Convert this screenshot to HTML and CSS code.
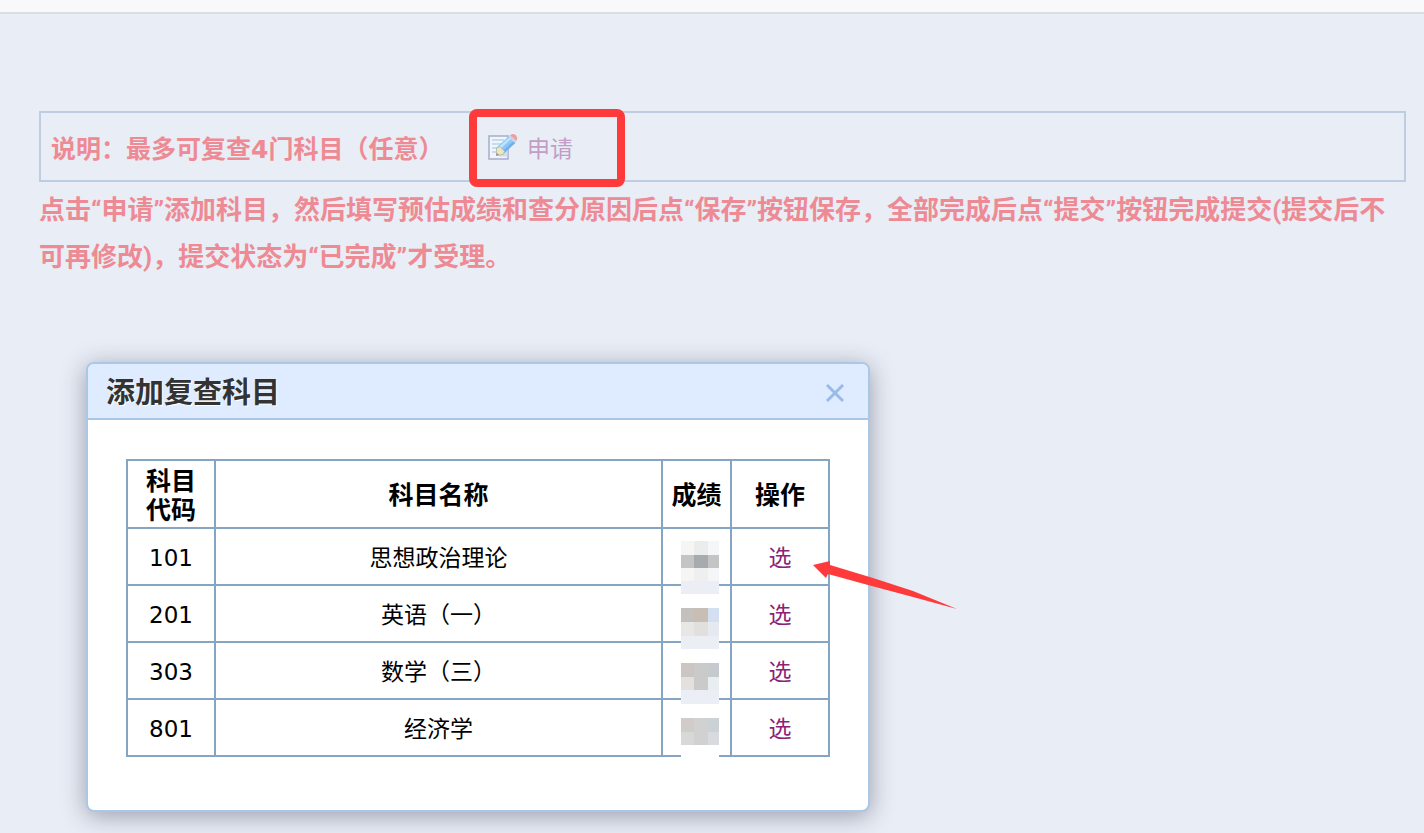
FILE: index.html
```html
<!DOCTYPE html>
<html lang="zh-CN">
<head>
<meta charset="utf-8">
<title>添加复查科目</title>
<link rel="stylesheet" href="styles.css">
</head>
<body>
<header class="topbar"></header>
<main class="page">
  <section class="notice">
    <strong class="notice-text">说明：最多可复查<span class="num">4</span>门科目（任意）</strong>
    <div class="apply">
      <a class="apply-link" href="#apply">
        <svg class="apply-icon" viewBox="0 0 30 28" aria-hidden="true">
          <rect x="1" y="3" width="19" height="23" fill="#f1f4fb" stroke="#aab1cf" stroke-width="1.6"/>
          <path d="M4 7h12M4 11h10M4 15h8M4 19h6" stroke="#b9d2ea" stroke-width="1.4"/>
          <path d="M11 22h7v-8" fill="none" stroke="#d5dded" stroke-width="3"/>
          <path d="M8 15 L21.500 2.500 L28 9 L15 21.500 L8.500 22.500Z" fill="#8cc8f5"/>
          <path d="M12 14.500 L23 4.500" stroke="#bfe4fb" stroke-width="2.400"/>
          <path d="M15 19.500 L26.500 9" stroke="#6fb0ea" stroke-width="2.400"/>
          <path d="M8.500 15 l3.500-1.500 l4.500 5 L15 21.500 L8.500 22.500Z" fill="#ece5bd" stroke="#b9b9a4" stroke-width=".8"/>
          <path d="M8.200 22.700 l.5-3 l2.300 2.200Z" fill="#8b8f93"/>
          <path d="M20.300 3.800 l2.200-1.900 l6 5.800 l-2.200 2Z" fill="#c9d5e6"/>
          <path d="M22.200 2.200 Q25-.3 28 2.200 Q30.300 5 28.200 7.800Z" fill="#e9a0a8"/>
        </svg>
        <span>申请</span>
      </a>
    </div>
  </section>
  <p class="tips">点击“申请”添加科目，然后填写预估成绩和查分原因后点“保存”按钮保存，全部完成后点“提交”按钮完成提交(提交后不可再修改)，提交状态为“已完成”才受理。</p>

  <section class="dialog" role="dialog" aria-labelledby="dialog-title">
    <header class="dialog-head">
      <h2 class="dialog-title" id="dialog-title">添加复查科目</h2>
      <button class="close" type="button" aria-label="关闭">
        <svg viewBox="0 0 20 20" aria-hidden="true"><path d="M2 2 18 18M18 2 2 18" stroke="#98bbe8" stroke-width="3"/></svg>
      </button>
    </header>
    <div class="dialog-body">
      <table class="subjects">
        <colgroup><col class="col-code"><col><col class="col-score"><col class="col-action"></colgroup>
        <thead>
          <tr><th>科目<br>代码</th><th>科目名称</th><th>成绩</th><th>操作</th></tr>
        </thead>
        <tbody>
          <tr><td>101</td><td>思想政治理论</td><td></td><td><a href="#101">选</a></td></tr>
          <tr><td>201</td><td>英语（一）</td><td></td><td><a href="#201">选</a></td></tr>
          <tr><td>303</td><td>数学（三）</td><td></td><td><a href="#303">选</a></td></tr>
          <tr><td>801</td><td>经济学</td><td></td><td><a href="#801">选</a></td></tr>
        </tbody>
      </table>
      <svg class="mosaic" viewBox="0 0 38 218" shape-rendering="crispEdges" aria-hidden="true">
        <rect width="38" height="218" fill="#fff"/>
        <path fill="#f6f5f4" d="M0 0h13v14H0zM0 27h13v13H0z"/>
        <path fill="#ebecec" d="M13 0h14v14H13z"/>
        <path fill="#f4f6f8" d="M27 0h11v14H27zM27 27h11v13H27z"/>
        <path fill="#c3c4c4" d="M0 14h13v13H0zM27 14h11v13H27z"/>
        <path fill="#a7abae" d="M13 14h14v13H13z"/>
        <path fill="#f0efef" d="M13 27h14v13H13z"/>
        <path fill="#ebeff5" d="M0 40h38v13H0zM0 95h38v13H0zM0 149h38v14H0z"/>
        <path fill="#c3c0be" d="M0 67h13v14H0z"/>
        <path fill="#c8beb4" d="M13 67h14v14H13z"/>
        <path fill="#d4e0f1" d="M27 67h11v14H27z"/>
        <path fill="#e9e7e6" d="M0 81h13v14H0z"/>
        <path fill="#e2e0de" d="M13 81h14v14H13z"/>
        <path fill="#e6eaf0" d="M27 81h11v14H27z"/>
        <path fill="#cbc6c4" d="M0 122h13v14H0z"/>
        <path fill="#cacaca" d="M13 122h14v27H13z"/>
        <path fill="#c6cace" d="M27 122h11v14H27z"/>
        <path fill="#e2e1e0" d="M0 136h13v13H0z"/>
        <path fill="#e8edef" d="M27 136h11v13H27z"/>
        <path fill="#d1ccc8" d="M0 177h13v14H0z"/>
        <path fill="#d1d1d1" d="M13 177h14v27H13z"/>
        <path fill="#ccd1d6" d="M27 177h11v14H27z"/>
        <path fill="#d7d8d8" d="M0 191h13v13H0z"/>
        <path fill="#d9dadf" d="M27 191h11v13H27z"/>
      </svg>
      <svg class="arrow" viewBox="0 0 146 50" aria-hidden="true">
        <path d="M0 4 L17 0 L17 4 L60 17 L100 30 L144 48 L100 36 L55 24 L15 13 L13 17Z" fill="#ff3a3a"/>
      </svg>
    </div>
  </section>
</main>
</body>
</html>
```
FILE: styles.css
```css
* { box-sizing: border-box; }

body {
  margin: 0;
  min-height: 100vh;
  background: #e9edf6;
  color: #000;
  font-family: "DejaVu Sans", "Noto Sans CJK SC", sans-serif;
  font-size: 23px;
}

.topbar {
  height: 14px;
  background: #f9f9fb;
  border-bottom: 2px solid #dddee1;
}

.page { padding: 97px 18px 16px 39px; }

.notice {
  display: flex;
  align-items: center;
  height: 71px;
  padding: 0 10px;
  border: 2px solid #becde1;
}

.notice-text,
.tips {
  color: #ee8a93;
  font-family: Roboto, "Noto Sans CJK SC", sans-serif;
  font-weight: 700;
}

.notice-text { width: 418px; font-size: 25px; white-space: nowrap; }
.num { font-family: "DejaVu Sans", sans-serif; }

.apply {
  position: relative;
  height: 78px;
  width: 156px;
  display: flex;
  align-items: center;
  margin-top: 2px;
  padding: 0 0 2px 19px;
}

.apply::after {
  content: "";
  position: absolute;
  inset: 0;
  border: 8px solid #ff3a3a;
  border-radius: 8px;
  pointer-events: none;
}

.apply-link {
  display: flex;
  align-items: center;
  gap: 9px;
  color: #c29dc6;
  text-decoration: none;
  white-space: nowrap;
}

.apply-icon { width: 30px; height: 28px; }

.tips {
  margin: 5px 0 81px;
  font-size: 26px;
  line-height: 47px;
}

.dialog {
  width: 784px;
  max-width: 100%;
  margin-left: 47px;
  background: #fff;
  border: 2px solid #a9c8e6;
  border-radius: 8px;
  box-shadow: 0 4px 24px rgba(40, 40, 60, 0.4);
}

.dialog-head {
  display: flex;
  align-items: center;
  justify-content: space-between;
  height: 56px;
  padding: 4px 22px 0 18px;
  background: #dfebff;
  border-bottom: 2px solid #a9c8e6;
  border-radius: 6px 6px 0 0;
}

.dialog-title {
  margin: 0;
  color: #333;
  font-size: 29px;
  line-height: 40px;
  text-shadow: 1px 1px 0 #fff;
}

.close {
  display: flex;
  width: 22px;
  height: 22px;
  padding: 1px;
  border: 0;
  background: none;
}

.close svg { width: 20px; height: 20px; }

.dialog-body { position: relative; padding: 39px 38px 53px; }

.subjects {
  width: 100%;
  table-layout: fixed;
  border-collapse: collapse;
  text-align: center;
}

.col-code { width: 88px; }
.col-score { width: 69px; }
.col-action { width: 98px; }

.subjects th,
.subjects td {
  height: 57px;
  padding: 3px 0 0;
  border: 2px solid #86a5c2;
  line-height: 29px;
}

.subjects th { height: 68px; font-size: 25px; }
.subjects a { color: #8b2277; text-decoration: none; }

.mosaic {
  position: absolute;
  top: 121px;
  right: 149px;
  width: 38px;
  height: 218px;
}

.arrow {
  position: absolute;
  top: 141px;
  left: 725px;
  width: 146px;
  height: 50px;
}
```
